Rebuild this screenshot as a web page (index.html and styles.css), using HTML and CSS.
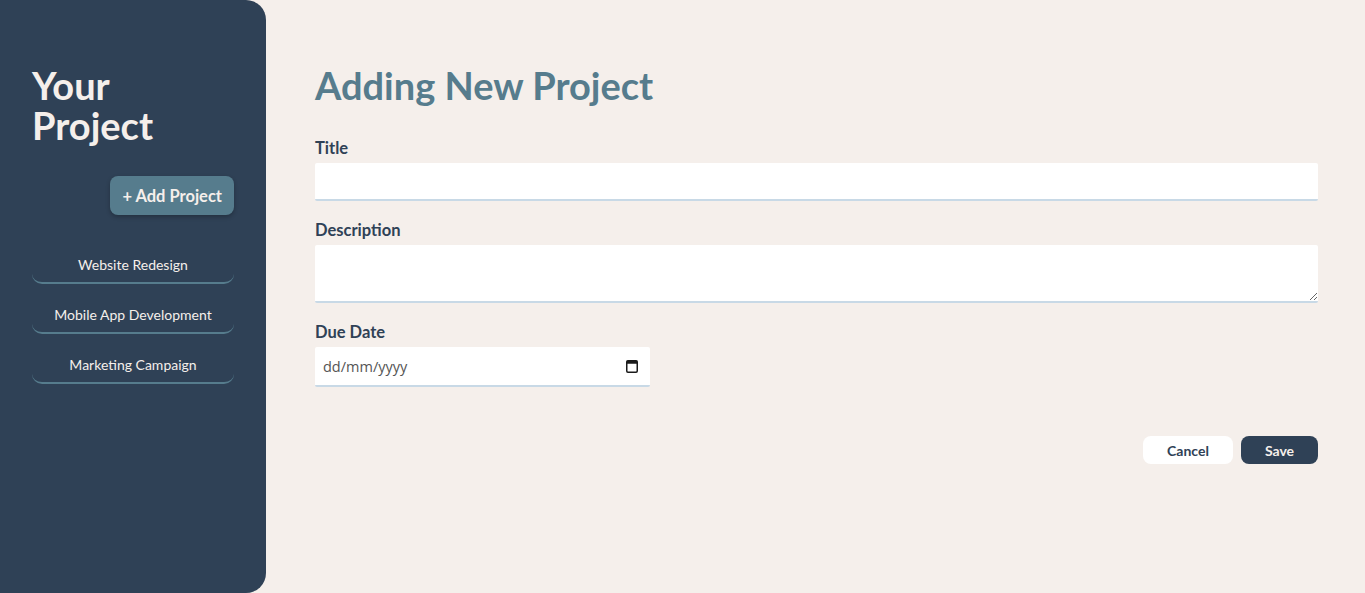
FILE: index.html
```html
<!DOCTYPE html>
<html lang="en-GB">
<head>
<meta charset="utf-8">
<title>Your Project</title>
<link rel="stylesheet" href="styles.css">
</head>
<body>
<div class="app">
  <aside class="sidebar">
    <h2 class="sidebar-title"><span class="title-line">Your</span><span class="title-line">Project</span></h2>
    <div class="add-row">
      <button class="add-btn">+ Add Project</button>
    </div>
    <ul class="project-list">
      <li><button class="project-item">Website Redesign</button></li>
      <li><button class="project-item">Mobile App Development</button></li>
      <li><button class="project-item">Marketing Campaign</button></li>
    </ul>
  </aside>
  <main class="main">
    <h1 class="page-title">Adding New Project</h1>
    <form class="form">
      <div class="field">
        <label class="label" for="title">Title</label>
        <input class="input" id="title" type="text">
      </div>
      <div class="field">
        <label class="label" for="desc">Description</label>
        <textarea class="input textarea" id="desc"></textarea>
      </div>
      <div class="field">
        <label class="label" for="due">Due Date</label>
        <div class="date-wrap">
          <input class="input date" id="due" type="text" placeholder="dd/mm/yyyy">
          <svg class="cal-icon" width="12" height="14" viewBox="0 0 12 14" aria-hidden="true">
            <rect x="0.75" y="1.75" width="10.5" height="11.5" rx="1.2" fill="none" stroke="#1a1a1a" stroke-width="1.5"/>
            <rect x="0.75" y="1.75" width="10.5" height="3" fill="#1a1a1a"/>
          </svg>
        </div>
      </div>
      <div class="actions">
        <button type="button" class="btn btn-cancel">Cancel</button>
        <button type="button" class="btn btn-save">Save</button>
      </div>
    </form>
  </main>
</div>
</body>
</html>
```
FILE: styles.css
```css
* { box-sizing: border-box; }
html, body { margin: 0; padding: 0; }
body {
  background: #F5EFEB;
  font-family: Lato, "Open Sans", sans-serif;
  color: #2F4156;
}
.app {
  display: flex;
  height: 593px;
}
.sidebar {
  width: 266px;
  flex-shrink: 0;
  background: #2F4156;
  border-radius: 0 20px 20px 0;
  padding: 65px 32px 32px 32px;
}
.sidebar-title {
  margin: 0;
  font-size: 38px;
  line-height: 40px;
  font-weight: 700;
  color: #F5EFEB;
}
.title-line {
  display: block;
}
.add-row {
  display: flex;
  justify-content: flex-end;
  margin-top: 31px;
}
.add-btn {
  font-family: inherit;
  font-size: 16.5px;
  font-weight: 700;
  color: #F5EFEB;
  background: #567C8D;
  border: none;
  border-radius: 8px;
  height: 39px;
  padding: 0 12px;
  box-shadow: 0 2px 4px rgba(0,0,0,0.25);
}
.project-list {
  list-style: none;
  margin: 33px 0 0;
  padding: 0;
  display: flex;
  flex-direction: column;
  gap: 14px;
}
.project-item {
  width: 100%;
  height: 36px;
  background: transparent;
  border: none;
  border-bottom: 2px solid #567C8D;
  border-radius: 0 0 10px 10px;
  font-family: inherit;
  font-size: 14px;
  color: #F5EFEB;
  padding: 0 0 2px;
}
.main {
  flex: 1;
  padding: 65px 47px 0 49px;
}
.page-title {
  margin: 0 0 31px;
  font-size: 38px;
  line-height: 40px;
  font-weight: 700;
  color: #567C8D;
}
.form {
  display: flex;
  flex-direction: column;
}
.field {
  display: flex;
  flex-direction: column;
  margin-bottom: 17px;
}
.label {
  font-size: 16.5px;
  line-height: 24px;
  font-weight: 700;
  color: #2F4156;
  margin-bottom: 3px;
}
.input {
  width: 100%;
  height: 38px;
  background: #fff;
  border: none;
  border-bottom: 2px solid #C8D9E6;
  border-radius: 2px;
  padding: 4px 8px;
  font-family: inherit;
  font-size: 16px;
  color: #2F4156;
  outline: none;
}
.textarea {
  height: 58px;
  resize: vertical;
}
.date-wrap {
  position: relative;
  width: 335px;
}
.date {
  height: 40px;
  padding: 4px 8px;
  font-family: "Open Sans", sans-serif;
  font-size: 14.5px;
}
.date::placeholder {
  color: #555;
  opacity: 1;
}
.cal-icon {
  position: absolute;
  right: 12px;
  top: 12px;
}
.actions {
  display: flex;
  justify-content: flex-end;
  gap: 8px;
  margin-top: 32px;
}
.btn {
  height: 28px;
  border: none;
  border-radius: 8px;
  font-family: inherit;
  font-size: 14px;
  font-weight: 700;
}
.btn-cancel {
  width: 90px;
  background: #fff;
  color: #2F4156;
}
.btn-save {
  width: 77px;
  background: #2F4156;
  color: #F5EFEB;
}
```
